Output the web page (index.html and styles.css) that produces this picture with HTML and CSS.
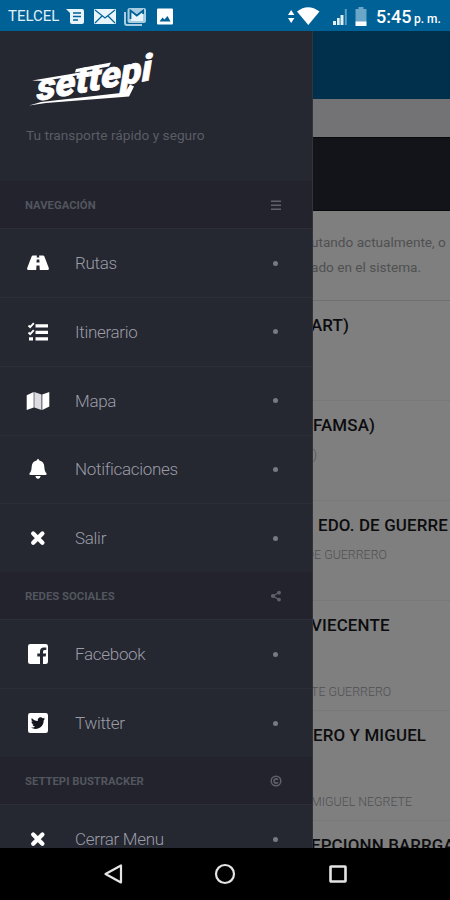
FILE: index.html
```html
<!DOCTYPE html>
<html lang="es">
<head>
<meta charset="utf-8">
<title>Settepi</title>
<link rel="stylesheet" href="styles.css">
</head>
<body>

<div class="status-bar">
  <span class="carrier">TELCEL</span>
  <svg class="status-left" width="110" height="20" viewBox="64 5 110 20">
    <path fill="#e8f4fb" d="M66 8h16q2 0 2 2v11q0 2-2 2H72q-2 0-2-2v-9z"/>
    <path stroke="#006196" stroke-width="1.6" d="M73 12h8M73 15.500h8M73 19h5"/>
    <rect x="94" y="8" width="22" height="15" rx="1" fill="#e8f4fb"/>
    <path fill="none" stroke="#006196" stroke-width="1.200" d="M95 9l10 8 10-8M95 22l7-7M115 22l-7-7"/>
    <path fill="none" stroke="#a8cce0" stroke-width="2" d="M125 11v11q0 2 2 2h15"/>
    <rect x="127.500" y="7" width="18.500" height="15" rx="2" fill="#a8cce0"/>
    <path fill="#e8f4fb" d="M131 10l6 5 6-5v10h-12z"/>
    <path fill="none" stroke="#006196" stroke-width="1.800" d="M130.500 18v-8.500l6.300 5 6.300-5V13"/>
    <rect x="157" y="7.500" width="16" height="16" rx="1" fill="#fff"/>
    <path fill="#006196" d="M159.500 20.500l3-4 2 2 3-3.500 3 5.500z"/>
  </svg>
  <svg class="status-right" width="86" height="22" viewBox="284 4 86 22">
    <path fill="#fff" d="M288 14l3.200-5 3.200 5zM288 17l3.200 5 3.200-5z"/>
    <path fill="#fff" d="M297 10.500q11-8.500 22.500 0L308.300 24z"/>
    <path fill="#e0eef6" d="M333 20h3v4h-3zM337 17h2.700v7H337zM340.500 14h3v10h-3z"/>
    <path fill="#5a9fc4" d="M344.800 8h2v16h-2z"/>
    <path fill="#69a6c7" d="M358.500 6h5v2h3v13h-11V8h3z"/>
    <path fill="#fff" d="M355.500 20.500h11V25h-11z"/>
  </svg>
  <span class="clock">5:45 <small>p. m.</small></span>
</div>

<div class="screen">
  <div class="drawer">
    <div class="drawer-header">
      <svg class="logo" width="134" height="56" viewBox="28 52 134 56">
        <g transform="translate(37 101) rotate(-10.500) skewX(-10) scale(1 1.060)">
          <text class="logo-text" x="0" y="0" textLength="117" lengthAdjust="spacingAndGlyphs">settepi</text>
        </g>
        <path fill="#fff" d="M32 80.500l48-8-1 2.500-35 6z"/>
        <path fill="#fff" d="M29 105.500l12-3.500 84-9.500 5-8 4 2-5 10-83 6.500z"/>
        <path fill="#fff" d="M76 69l35-6.500-2 4-34 6z"/>
      </svg>
      <p class="slogan">Tu transporte rápido y seguro</p>
    </div>

    <div class="menu-heading">
      <span>NAVEGACIÓN</span>
      <svg width="12" height="12" viewBox="0 0 12 12"><path stroke="#60626b" stroke-width="1.500" d="M1 2.200h10M1 6.200h10M1 10.200h10"/></svg>
    </div>
    <a class="menu-item">
      <svg width="24" height="24" viewBox="0 0 24 24"><path fill="#fff" fill-rule="evenodd" d="M7 4.500h3.900l-.2 2h2.600l-.2-2H17q1 0 1.400 1l4.400 11.500q.6 2-1 2h-8l-.3-4.500h-3L10.200 19h-8q-1.600 0-1-2L5.600 5.500Q6 4.500 7 4.500zM10.700 8.500l-.2 3h3l-.2-3z"/></svg>
      <span>Rutas</span><i></i>
    </a>
    <a class="menu-item">
      <svg width="24" height="24" viewBox="0 0 24 24"><path fill="#fff" d="M9.500 4.200H22v3.300H9.500zM9.500 10.800H22v3.300H9.500zM9.500 17.300H22v3.300H9.500zM3 17.300h4v3.300H3z"/><path fill="none" stroke="#fff" stroke-width="1.900" d="M2.500 5.500l1.700 1.700 3.600-4M2.500 12.500l1.700 1.700 3.600-4"/></svg>
      <span>Itinerario</span><i></i>
    </a>
    <a class="menu-item">
      <svg width="24" height="24" viewBox="0 0 24 24"><path fill="#fff" d="M.7 6.200L7.700 3v15.500L.7 21zM16.300 5.500l7-2.500v14.500l-7 3.500z"/><path fill="#dcdce2" d="M8.300 3l7.200 2.500V21l-7.200-2.500z"/></svg>
      <span>Mapa</span><i></i>
    </a>
    <a class="menu-item">
      <svg width="24" height="24" viewBox="0 0 24 24"><path fill="#fff" d="M12 2q1.300 0 1.300 1.500 4.700 1 5 6 .2 5 2.200 6.700.7 1.800-1 1.800h-15q-1.700 0-1-1.800 2-1.700 2.200-6.700.3-5 5-6Q10.700 2 12 2zM9.300 19h5.400Q14 22 12 22t-2.700-3z"/></svg>
      <span>Notificaciones</span><i></i>
    </a>
    <a class="menu-item">
      <svg width="24" height="24" viewBox="0 0 24 24"><path stroke="#fff" stroke-width="4.300" stroke-linecap="round" d="M7.200 7.600l9.200 9.200M16.400 7.600l-9.200 9.200"/></svg>
      <span>Salir</span><i></i>
    </a>

    <div class="menu-heading">
      <span>REDES SOCIALES</span>
      <svg width="12" height="12" viewBox="0 0 12 12"><path fill="none" stroke="#60626b" stroke-width="1.300" d="M9 2.500L3 6l6 3.700"/><circle cx="9" cy="2.700" r="1.900" fill="#60626b"/><circle cx="3" cy="6" r="2.100" fill="#60626b"/><circle cx="9" cy="9.600" r="1.900" fill="#60626b"/></svg>
    </div>
    <a class="menu-item">
      <svg width="24" height="24" viewBox="0 0 24 24"><path fill="#fff" d="M4.300 2h15.400Q22 2 22 4.300v15.400q0 2.300-2.300 2.300H17v-7.500h2.700l.4-3H17V9.600q0-1.500 1.600-1.500h1.700V5.500h-2.400q-3.900 0-3.900 3.800v2.200h-2.700v3H14V22H4.300Q2 22 2 19.700V4.300Q2 2 4.300 2z"/></svg>
      <span>Facebook</span><i></i>
    </a>
    <a class="menu-item">
      <svg width="24" height="24" viewBox="0 0 24 24"><rect x="2" y="2" width="20" height="20" rx="2.300" fill="#fff"/><path fill="#14151d" d="M17.700 9.200c.2 5-3.700 8.700-8.200 8.700-1.700 0-3.200-.5-4.500-1.300 1.500.1 3-.3 4.100-1.200-1.300 0-2.300-.9-2.700-2 .5.100.9.100 1.300-.1-1.400-.3-2.300-1.500-2.300-2.900.4.200.8.400 1.300.4-1.300-.9-1.600-2.600-.9-3.900 1.500 1.800 3.600 2.900 6 3-.4-1.900 1-3.600 2.800-3.600.8 0 1.600.3 2.100.9.700-.1 1.300-.4 1.800-.7-.2.700-.7 1.200-1.200 1.600.6-.1 1.100-.2 1.700-.5-.4.700-.8 1.200-1.300 1.600z"/></svg>
      <span>Twitter</span><i></i>
    </a>

    <div class="menu-heading">
      <span>SETTEPI BUSTRACKER</span>
      <svg width="12" height="12" viewBox="0 0 12 12"><g fill="none" stroke="#60626b"><circle cx="6" cy="6" r="4.800" stroke-width="1.500"/><path stroke-width="1.500" d="M8 4.800Q6 3 4.400 4.600q-1 1.400 0 2.800Q6 9 8 7.200"/></g></svg>
    </div>
    <a class="menu-item">
      <svg width="24" height="24" viewBox="0 0 24 24"><path stroke="#fff" stroke-width="4.300" stroke-linecap="round" d="M7.200 7.600l9.200 9.200M16.400 7.600l-9.200 9.200"/></svg>
      <span>Cerrar Menu</span><i></i>
    </a>
  </div>

  <div class="content">
    <div class="toolbar"></div>
    <div class="band"></div>
    <div class="banner"></div>
    <div class="intro">
      <p>utando actualmente, o</p>
      <p>ado en el sistema.</p>
    </div>
    <div class="route">
      <h3 class="cut">ART)</h3>
    </div>
    <div class="route">
      <h3>FAMSA)</h3>
      <p>)</p>
    </div>
    <div class="route">
      <h3 class="space">EDO. DE GUERRE</h3>
      <p class="cut-letter">DE GUERRERO</p>
    </div>
    <div class="route tall">
      <h3 class="cut">VIECENTE</h3>
      <p class="cut">TE GUERRERO</p>
    </div>
    <div class="route tall">
      <h3>ERO Y MIGUEL</h3>
      <p class="cut">MIGUEL NEGRETE</p>
    </div>
    <div class="route">
      <h3 class="cut">EPCIONN BARRGA</h3>
    </div>
  </div>
</div>

<div class="nav-bar">
  <svg width="24" height="24" viewBox="0 0 24 24"><path fill="none" stroke="#e4e4e4" stroke-width="2.200" stroke-linejoin="round" d="M4.500 12L20 3.500v17z"/></svg>
  <svg width="24" height="24" viewBox="0 0 24 24"><circle cx="12" cy="12" r="9" fill="none" stroke="#e4e4e4" stroke-width="2.200"/></svg>
  <svg width="24" height="24" viewBox="0 0 24 24"><rect x="4.500" y="4.500" width="15" height="15" rx=".5" fill="none" stroke="#e4e4e4" stroke-width="2.600"/></svg>
</div>

</body>
</html>
```
FILE: styles.css
```css
* {
  box-sizing: border-box;
}

body {
  margin: 0;
  width: 450px;
  height: 900px;
  overflow: hidden;
  background: #000;
  font-family: Roboto, sans-serif;
}

h3, p {
  margin: 0;
}

svg {
  display: block;
  flex: none;
}

/* Status bar */
.status-bar {
  display: flex;
  align-items: center;
  height: 31px;
  padding: 0 8px;
  background: #006196;
  color: #fff;
  white-space: nowrap;
}

.carrier {
  width: 56px;
  padding-top: 1px;
  font-size: 15px;
  color: #e2f0f8;
}

.status-right {
  margin-left: 110px;
}

.clock {
  margin-left: 6px;
  padding-top: 1px;
  font-size: 18px;
  font-weight: 500;
}

.clock small {
  margin-left: -2px;
  font-size: 12px;
}

.screen {
  display: flex;
  height: 817px;
  overflow: hidden;
}

/* Side menu */
.drawer {
  width: 313px;
  flex: none;
  background: #252731;
  border-right: 1px solid #33343b;
}

.drawer-header {
  height: 150px;
  padding: 21px 20px 0 26px;
}

.logo {
  margin-left: 2px;
  overflow: visible;
}

.logo-text {
  font-family: Roboto, sans-serif;
  font-size: 34px;
  font-weight: 900;
  font-style: italic;
  fill: #fff;
  stroke: #fff;
  stroke-width: 0.7px;
}

.slogan {
  margin-top: 19px;
  font-size: 13.7px;
  line-height: 16px;
  color: #5b5d65;
  white-space: nowrap;
}

.menu-heading {
  display: flex;
  align-items: center;
  justify-content: space-between;
  height: 47.2px;
  padding: 1px 30px 0 25px;
  background: #22232d;
  color: #53565e;
  font-size: 11.3px;
  font-weight: 700;
}

.menu-item {
  display: flex;
  align-items: center;
  height: 68.8px;
  padding: 0 34px 0 26px;
  border-top: 1px solid #2c2e38;
  color: #9b9ca6;
  font-size: 17px;
  font-weight: 300;
  letter-spacing: -0.3px;
}

.menu-item span {
  flex: 1;
  margin-left: 25px;
}

.menu-item i {
  width: 5px;
  height: 5px;
  border-radius: 50%;
  background: #777984;
}

/* Page behind the menu */
.content {
  flex: 1;
  overflow: hidden;
  background: #7f7f7f;
  white-space: nowrap;
}

.toolbar {
  height: 68px;
  background: #00304b;
}

.band {
  height: 38px;
  background: #737375;
}

.banner {
  height: 74px;
  background: #121419;
  border-top: 1px solid #08090b;
  border-bottom: 1px solid #08090b;
}

.intro {
  height: 90px;
  padding-top: 19px;
  border-bottom: 1px solid #6f7072;
  color: #4f5051;
  font-size: 13.6px;
  line-height: 25px;
}

.intro p {
  margin-left: -2px;
}

.route {
  height: 100px;
  padding-top: 12px;
  border-bottom: 1px solid #797979;
}

.route.tall {
  height: 110px;
}

.route h3 {
  height: 24px;
  color: #0c0c0e;
  font-size: 16.9px;
  font-weight: 500;
  line-height: 24px;
  letter-spacing: 0.15px;
}

.route p {
  margin-top: 8px;
  color: #505052;
  font-size: 12.4px;
  font-weight: 300;
  line-height: 20px;
}

.route.tall p {
  margin-top: 45px;
}

.route .cut {
  margin-left: -2px;
}

.route .space {
  margin-left: 5px;
}

.route .cut-letter {
  margin-left: -7px;
}

/* Android buttons */
.nav-bar {
  display: flex;
  align-items: center;
  justify-content: center;
  gap: 88.500px;
  height: 52px;
  background: #000;
}
```
